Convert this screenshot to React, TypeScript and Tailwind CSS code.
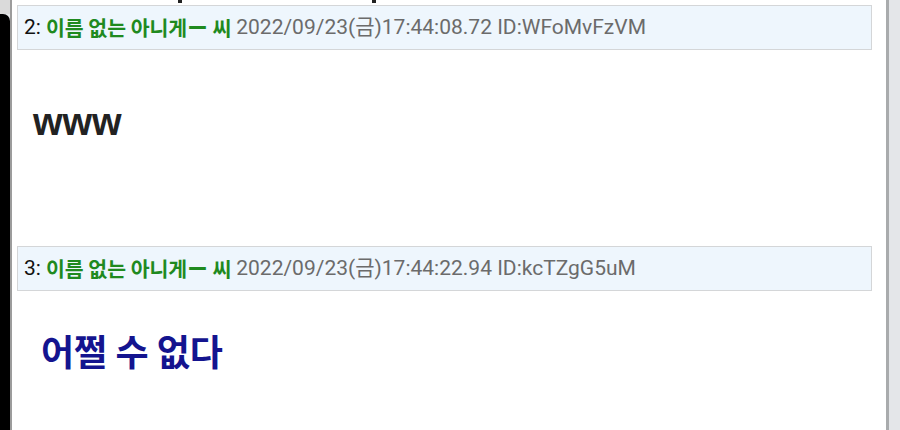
import React from 'react'

type Post = {
  no: number
  name: string
  date: string
  id: string
  body: React.ReactNode
}

const posts: Post[] = [
  {
    no: 2,
    name: '이름 없는 아니게ー 씨',
    date: '2022/09/23(금)17:44:08.72',
    id: 'WFoMvFzVM',
    body: (
      <div className="pl-[16px] pt-[53px] h-[196px] text-[38px] font-bold leading-none text-[#222] [font-family:Arial,'Liberation_Sans',sans-serif]">
        www
      </div>
    ),
  },
  {
    no: 3,
    name: '이름 없는 아니게ー 씨',
    date: '2022/09/23(금)17:44:22.94',
    id: 'kcTZgG5uM',
    body: (
      <div className="pl-[24px] pt-[41px] text-[36px] font-bold leading-none text-[#14148f] [font-family:'Noto_Sans_CJK_KR',sans-serif]">
        어쩔 수 없다
      </div>
    ),
  },
]

function PostHeader({ post }: { post: Post }) {
  return (
    <div className="mr-[14px] h-[45px] border border-[#d4d6d8] bg-[#eef6fd] pl-[6px] flex items-center text-[21px] whitespace-nowrap [font-family:Roboto,'Noto_Sans_CJK_KR',sans-serif]">
      <span className="text-[#111]">{post.no}: </span>
      <span className="ml-[5px] text-[20.5px] font-bold text-[#1f8a1f] [font-family:'Noto_Sans_CJK_KR',sans-serif]">{post.name}</span>
      <span className="ml-[5px] text-[#6b6b6b]">
        {post.date} ID:{post.id}
      </span>
    </div>
  )
}

export default function App() {
  return (
    <div className="flex h-[430px] w-[900px] overflow-hidden bg-[#e6e8ea]">
      <div className="flex w-[10px] flex-col">
        <div className="h-[14px] bg-[#dadada]" />
        <div className="flex-1 rounded-tr-[7px] bg-black" />
      </div>
      <div className="w-[2px] bg-[#9c9c9c]" />
      <div className="relative flex-1 bg-white pl-[5px] pt-[5px]">
        <span className="absolute left-[166px] top-0 h-[3px] w-[4px] bg-[#222]" />
        <span className="absolute left-[360px] top-0 h-[3px] w-[4px] bg-[#222]" />
        {posts.map((p) => (
          <div key={p.no}>
            <PostHeader post={p} />
            {p.body}
          </div>
        ))}
      </div>
      <div className="w-[3px] bg-[#a9abad]" />
      <div className="w-[11px] bg-[#e4e6e9]" />
    </div>
  )
}
